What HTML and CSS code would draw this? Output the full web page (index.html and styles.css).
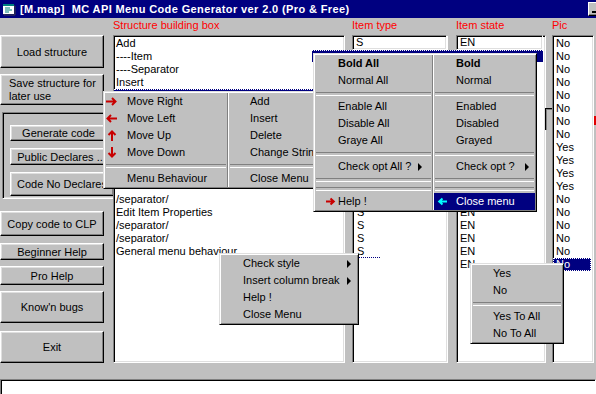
FILE: index.html
```html
<!DOCTYPE html>
<html>
<head>
<meta charset="utf-8">
<link rel="stylesheet" href="styles.css">
</head>
<body>
<div class="window">
  <div class="titlebar">
    <svg class="app-icon" width="16" height="16" viewBox="0 0 16 16">
      <rect x="2" y="3" width="11" height="10" fill="#fff"/>
      <rect x="2" y="3" width="11" height="2" fill="#008080"/>
      <path d="M4 7 L9 7 M4 9 L11 9 M4 11 L8 11" stroke="#008080" stroke-width="1"/>
      <path d="M13 5 L14 5 L14 14 L3 14 L3 13" stroke="#404040" stroke-width="1" fill="none"/>
    </svg>
    <span class="title">[M.map]  MC API Menu Code Generator ver 2.0 (Pro &amp; Free)</span>
    <div class="min-btn"><span class="min-glyph"></span></div>
  </div>

  <div class="main">
    <div class="side">
      <div class="btn b-load">Load structure</div>
      <div class="btn b-save">Save structure for<br>later use</div>
      <div class="frame">
        <div class="btn b-gen">Generate code</div>
        <div class="btn b-pub">Public Declares ..</div>
        <div class="btn b-nodecl">Code No Declares</div>
      </div>
      <div class="btn b-copy">Copy code to CLP</div>
      <div class="btn b-begin">Beginner Help</div>
      <div class="btn b-pro">Pro Help</div>
      <div class="btn b-bugs">Know'n bugs</div>
      <div class="btn b-exit">Exit</div>
    </div>

    <div class="col c-struct">
      <div class="label">Structure building box</div>
      <div class="list l-struct">
        <div class="row">Add</div>
        <div class="row">----Item</div>
        <div class="row">----Separator</div>
        <div class="row">Insert</div>
        <div class="row sel"></div>
        <div class="row"></div>
        <div class="row"></div>
        <div class="row"></div>
        <div class="row"></div>
        <div class="row"></div>
        <div class="row"></div>
        <div class="row"></div>
        <div class="row">/separator/</div>
        <div class="row">Edit Item Properties</div>
        <div class="row">/separator/</div>
        <div class="row">/separator/</div>
        <div class="row">General menu behaviour</div>
      </div>
    </div>

    <div class="col c-type">
      <div class="label">Item type</div>
      <div class="list l-type">
        <div class="row"></div><div class="row"></div><div class="row"></div><div class="row"></div>
        <div class="row"></div><div class="row"></div><div class="row"></div><div class="row"></div>
        <div class="row"></div><div class="row"></div><div class="row"></div><div class="row"></div>
        <div class="row"></div><div class="row">S</div><div class="row">S</div><div class="row">S</div>
        <div class="row focus">S</div>
      </div>
      <div class="tbox tb-type">S</div>
    </div>

    <div class="col c-state">
      <div class="label">Item state</div>
      <div class="list l-state">
        <div class="row"></div><div class="row"></div><div class="row"></div><div class="row"></div>
        <div class="row"></div><div class="row"></div><div class="row"></div><div class="row"></div>
        <div class="row"></div><div class="row"></div><div class="row"></div><div class="row"></div>
        <div class="row"></div><div class="row">EN</div><div class="row">EN</div><div class="row">EN</div>
        <div class="row">EN</div><div class="row">EN</div>
      </div>
      <div class="tbox tb-state">EN</div>
    </div>

    <div class="col c-pic">
      <div class="label">Pic</div>
      <div class="list l-pic">
        <div class="row">No</div><div class="row">No</div><div class="row">No</div><div class="row">No</div>
        <div class="row">No</div><div class="row">No</div><div class="row">No</div><div class="row">No</div>
        <div class="row">Yes</div><div class="row">Yes</div><div class="row">Yes</div><div class="row">Yes</div>
        <div class="row">No</div><div class="row">No</div><div class="row">No</div><div class="row">No</div>
        <div class="row">No</div><div class="row sel">No</div>
      </div>
    </div>
  </div>

  <div class="status"></div>

  <!-- overlays -->
  <div class="hidden-box"></div>
  <div class="red-bit"></div>
  <div class="navy-strip"></div>

  <div class="menu two m1">
    <div class="mcol m1-left">
      <div class="mi"><span class="ico"><svg width="12" height="9" viewBox="0 0 12 9"><path d="M0 4.5H9M6 1L9.5 4.5L6 8" stroke="#c80000" stroke-width="2" fill="none"/></svg></span>Move Right</div>
      <div class="mi"><span class="ico"><svg width="12" height="9" viewBox="0 0 12 9"><path d="M11 4.5H2M5 1L1.5 4.5L5 8" stroke="#c80000" stroke-width="2" fill="none"/></svg></span>Move Left</div>
      <div class="mi"><span class="ico"><svg width="12" height="11" viewBox="0 0 12 11"><path d="M6 11V2M2.5 5L6 1.5L9.5 5" stroke="#c80000" stroke-width="2" fill="none"/></svg></span>Move Up</div>
      <div class="mi"><span class="ico"><svg width="12" height="11" viewBox="0 0 12 11"><path d="M6 0V9M2.5 6L6 9.5L9.5 6" stroke="#c80000" stroke-width="2" fill="none"/></svg></span>Move Down</div>
      <div class="msep"></div>
      <div class="mi"><span class="ico"></span>Menu Behaviour</div>
    </div>
    <div class="vdiv"></div>
    <div class="mcol m1-right">
      <div class="mi">Add</div>
      <div class="mi">Insert</div>
      <div class="mi">Delete</div>
      <div class="mi">Change String</div>
      <div class="msep"></div>
      <div class="mi">Close Menu</div>
    </div>
  </div>

  <div class="menu two m2">
    <div class="mcol m2-left">
      <div class="mi b"><span class="ico"></span>Bold All</div>
      <div class="mi"><span class="ico"></span>Normal All</div>
      <div class="msep"></div>
      <div class="mi"><span class="ico"></span>Enable All</div>
      <div class="mi"><span class="ico"></span>Disable All</div>
      <div class="mi"><span class="ico"></span>Graye All</div>
      <div class="msep"></div>
      <div class="mi"><span class="ico"></span>Check opt All ?<span class="sub"></span></div>
      <div class="msep"></div>
      <div class="msep"></div>
      <div class="mi"><span class="ico"><svg width="10" height="9" viewBox="0 0 10 9"><path d="M0 4.5H7.5M4.5 1.5L7.8 4.5L4.5 7.5" stroke="#c80000" stroke-width="2" fill="none"/></svg></span>Help !</div>
    </div>
    <div class="vdiv"></div>
    <div class="mcol m2-right">
      <div class="mi b"><span class="ico"></span>Bold</div>
      <div class="mi"><span class="ico"></span>Normal</div>
      <div class="msep"></div>
      <div class="mi"><span class="ico"></span>Enabled</div>
      <div class="mi"><span class="ico"></span>Disabled</div>
      <div class="mi"><span class="ico"></span>Grayed</div>
      <div class="msep"></div>
      <div class="mi"><span class="ico"></span>Check opt ?<span class="sub"></span></div>
      <div class="msep"></div>
      <div class="msep"></div>
      <div class="mi hl"><span class="ico"><svg width="10" height="9" viewBox="0 0 10 9"><path d="M10 4.5H2.5M5.5 1.5L2.2 4.5L5.5 7.5" stroke="#00ffff" stroke-width="2" fill="none"/></svg></span>Close menu</div>
    </div>
  </div>

  <div class="menu m3">
    <div class="mi">Check style<span class="sub"></span></div>
    <div class="mi">Insert column break<span class="sub"></span></div>
    <div class="mi">Help !</div>
    <div class="mi">Close Menu</div>
  </div>

  <div class="menu m4">
    <div class="mi">Yes</div>
    <div class="mi">No</div>
    <div class="msep"></div>
    <div class="mi">Yes To All</div>
    <div class="mi">No To All</div>
  </div>
</div>
</body>
</html>
```

FILE: styles.css
```css
* { box-sizing: border-box; }
html, body { margin: 0; padding: 0; }
body {
  width: 596px;
  height: 394px;
  overflow: hidden;
  background: #c0c0c0;
  font-family: "Liberation Sans", Arial, sans-serif;
  font-size: 11px;
  color: #000;
}
.window {
  position: relative;
  width: 596px;
  height: 394px;
  overflow: hidden;
  background: #c0c0c0;
}

/* title bar */
.titlebar {
  height: 18px;
  background: #000080;
  color: #fff;
  display: flex;
  align-items: center;
  overflow: hidden;
}
.app-icon { flex: none; margin-left: 1px; }
.title {
  margin-left: 3px;
  font-weight: bold;
  font-size: 11px;
  letter-spacing: 0.38px;
  white-space: pre;
  flex: 1;
}
.min-btn {
  flex: none;
  width: 16px;
  height: 14px;
  margin-right: -8px;
  background: #c0c0c0;
  border: 1px solid;
  border-color: #fff #000 #000 #fff;
  box-shadow: inset -1px -1px #808080;
  position: relative;
}
.min-glyph {
  position: absolute;
  left: 3px;
  bottom: 2px;
  width: 6px;
  height: 2px;
  background: #000;
}

/* main area */
.main {
  display: flex;
  height: 345px;
}
.side {
  width: 105px;
  flex: none;
  display: flex;
  flex-direction: column;
  padding-top: 17px;
}
.btn {
  background: #c0c0c0;
  border: 1px solid;
  border-color: #fff #000 #000 #fff;
  box-shadow: inset -1px -1px #808080, inset 1px 1px #dfdfdf;
  display: flex;
  align-items: center;
  justify-content: center;
  white-space: nowrap;
  width: 104px;
  flex: none;
}
.b-load { height: 33px; }
.b-save { height: 31px; margin-top: 6px; justify-content: flex-start; padding-left: 8px; line-height: 13px; }
.frame {
  margin-top: 7px;
  margin-left: 2px;
  width: 115px;
  height: 87px;
  flex: none;
  border: 1px solid;
  border-color: #808080 #fff #fff #808080;
  box-shadow: inset 1px 1px #000, inset -1px -1px #dfdfdf;
  padding: 12px 0 0 7px;
  display: flex;
  flex-direction: column;
}
.b-gen { height: 16px; width: 97px; }
.b-pub { height: 17px; width: 100px; margin-top: 7px; }
.b-nodecl { height: 24px; width: 104px; margin-top: 7px; }
.b-copy { height: 25px; margin-top: 12px; }
.b-begin { height: 17px; margin-top: 7px; }
.b-pro { height: 19px; margin-top: 6px; }
.b-bugs { height: 32px; margin-top: 6px; }
.b-exit { height: 32px; margin-top: 8px; }

.col {
  flex: none;
  display: flex;
  flex-direction: column;
  position: relative;
}
.c-struct { margin-left: 8px; width: 232px; }
.c-type { margin-left: 7px; width: 96px; }
.c-state { margin-left: 8px; width: 90px; }
.c-pic { margin-left: 6px; width: 42px; }
.label {
  height: 17px;
  line-height: 15px;
  color: #ff0000;
  white-space: nowrap;
  flex: none;
}
.list {
  flex: 1;
  background: #fff;
  border: 1px solid;
  border-color: #808080 #fff #fff #808080;
  box-shadow: inset 1px 1px #000, inset -1px -1px #dfdfdf;
  padding-top: 1px;
  overflow: hidden;
}
.row {
  height: 13px;
  line-height: 13px;
  white-space: nowrap;
  padding-left: 2px;
  position: relative;
}
.l-struct .row { padding-left: 2px; }
.l-type .row { padding-left: 4px; }
.l-state .row { padding-left: 3px; }
.l-pic .row { padding-left: 3px; }
.row.sel {
  background: #000080;
  color: #fff;
  outline: 1px dotted #ffffff;
  outline-offset: -1px;
}
.l-pic .row.sel { margin-right: 2px; }
.row.focus::after {
  content: "";
  position: absolute;
  left: 4px;
  bottom: 0;
  width: 23px;
  border-bottom: 1px dotted #000080;
}
.tbox {
  position: absolute;
  top: 17px;
  left: 0;
  height: 15px;
  background: #fff;
  border: 1px solid;
  border-color: #808080 #fff #fff #808080;
  box-shadow: inset 1px 1px #000, inset -1px -1px #dfdfdf;
  line-height: 13px;
  padding-left: 3px;
}
.tb-type { width: 95px; }
.tb-state { width: 87px; }

.status {
  margin-top: 16px;
  height: 18px;
  background: #fff;
  border: 1px solid;
  border-color: #808080 #fff #fff #808080;
  box-shadow: inset 1px 1px #000;
}

/* overlays */
.hidden-box {
  position: absolute;
  left: 545px;
  top: 108px;
  width: 7px;
  height: 22px;
  border-top: 1px solid #000;
  border-left: 1px solid #000;
  box-shadow: inset 1px 1px #808080;
}
.red-bit {
  position: absolute;
  left: 594px;
  top: 116px;
  width: 2px;
  height: 9px;
  background: #e00000;
}
.navy-strip {
  position: absolute;
  left: 312px;
  top: 50px;
  width: 231px;
  height: 12px;
  background: #000080;
  border-top: 1px dotted #ffffff;
}

.menu {
  position: absolute;
  background: #c0c0c0;
  border: 1px solid;
  border-color: #dfdfdf #000 #000 #dfdfdf;
  box-shadow: inset 1px 1px #fff, inset -1px -1px #808080;
  padding: 1px;
}
.menu.two { display: flex; }
.mcol { display: flex; flex-direction: column; flex: none; }
.vdiv {
  flex: none;
  width: 2px;
  border-left: 1px solid #808080;
  border-right: 1px solid #fff;
}
.mi {
  height: 17px;
  line-height: 17px;
  display: flex;
  align-items: center;
  white-space: nowrap;
}
.mi.b { font-weight: bold; }
.mi.hl { background: #000080; color: #fff; }
.ico {
  flex: none;
  display: flex;
  align-items: center;
}
.msep {
  height: 9px;
  display: flex;
  align-items: center;
  padding: 0 1px;
}
.msep::before {
  content: "";
  flex: 1;
  height: 2px;
  border-top: 1px solid #808080;
  border-bottom: 1px solid #fff;
}
.sub {
  margin-left: auto;
  width: 0;
  height: 0;
  border-left: 4px solid #000;
  border-top: 4px solid transparent;
  border-bottom: 4px solid transparent;
}

.m1 { left: 103px; top: 91px; width: 242px; height: 98px; }
.m1-left { width: 122px; }
.m1-left .mi { padding-left: 1px; }
.m1-left .ico { width: 21px; }
.m1-right { flex: 1; }
.m1-right .mi { padding-left: 21px; }

.m2 { left: 313px; top: 53px; width: 224px; height: 159px; }
.m2-left { width: 117px; }
.m2-left .mi { padding-left: 11px; padding-right: 10px; }
.m2-left .ico { width: 12px; }
.m2-right { flex: 1; }
.m2-right .mi { padding-left: 3px; padding-right: 6px; }
.m2-right .ico { width: 19px; }

.m3 { left: 219px; top: 253px; width: 140px; height: 72px; }
.m3 .mi { padding-left: 22px; padding-right: 6px; }

.m4 { left: 470px; top: 263px; width: 94px; height: 81px; }
.m4 .mi { padding-left: 21px; }
```
